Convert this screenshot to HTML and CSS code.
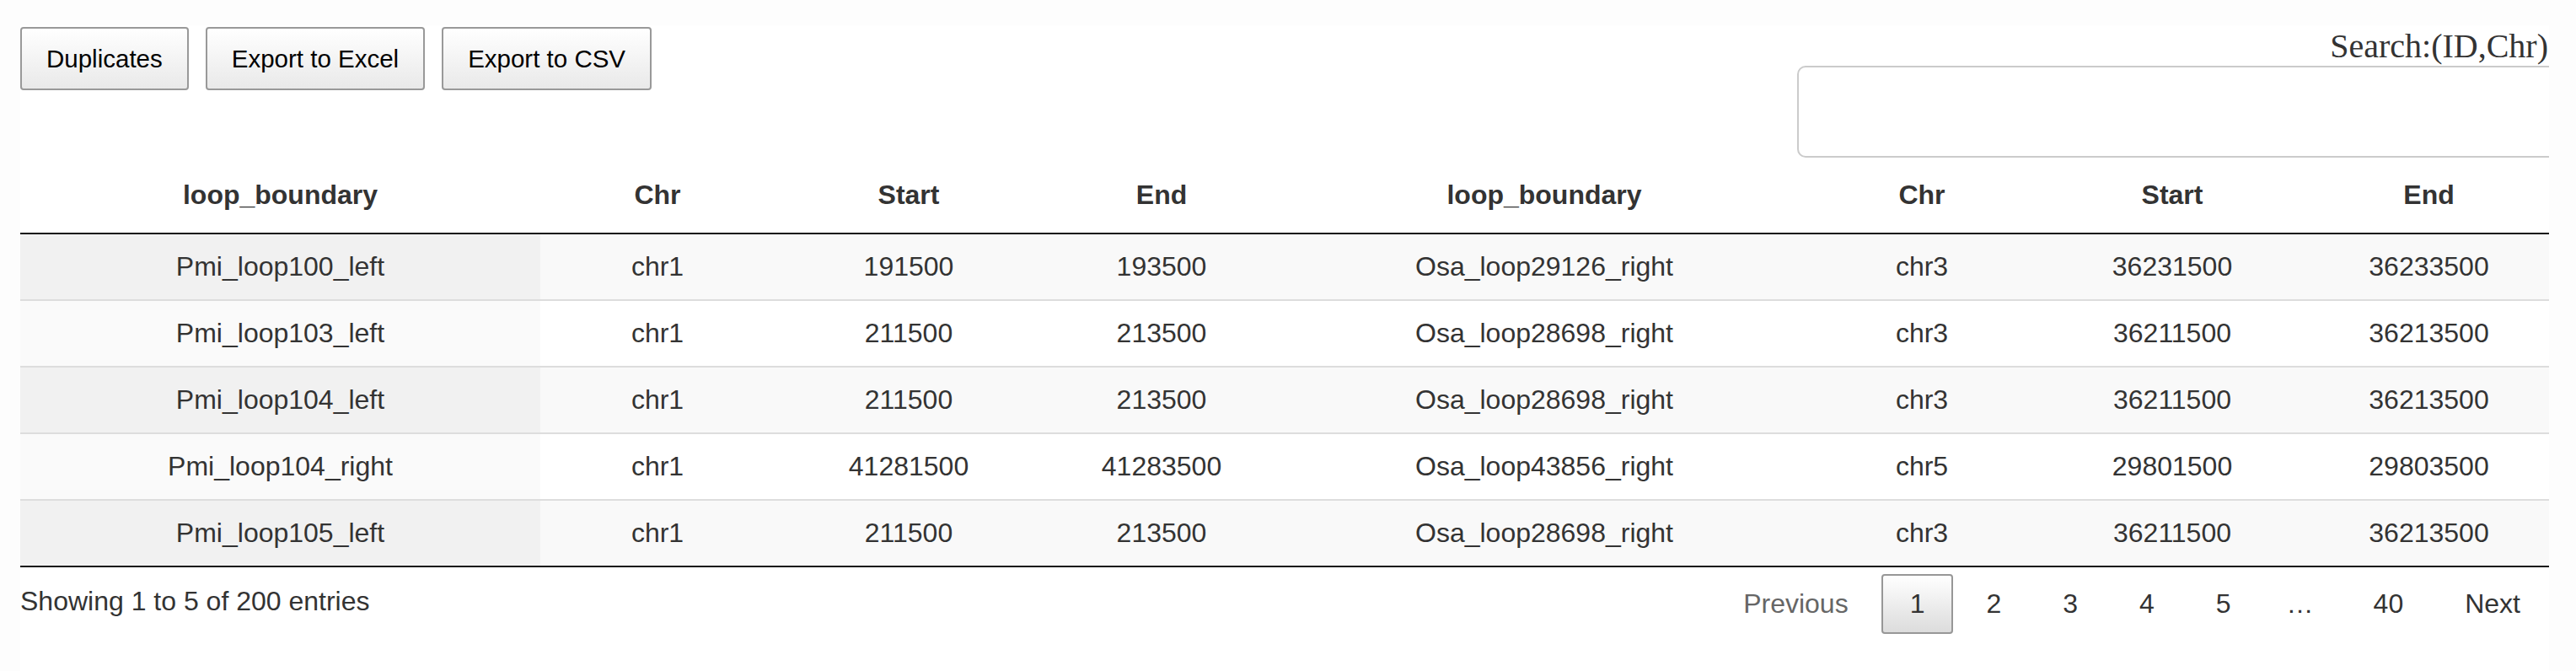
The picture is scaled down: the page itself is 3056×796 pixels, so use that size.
FILE: index.html
```html
<!DOCTYPE html>
<html>
<head>
<meta charset="utf-8">
<title>Loop boundaries</title>
<link rel="stylesheet" href="styles.css">
</head>
<body>
<div class="wrapper">
  <div class="top">
    <div class="buttons">
      <button class="btn">Duplicates</button>
      <button class="btn">Export to Excel</button>
      <button class="btn">Export to CSV</button>
    </div>
    <div class="filter">
      <label class="filter-label">Search:(ID,Chr)</label>
      <input class="filter-input" type="search">
    </div>
  </div>
  <table class="data">
    <colgroup>
      <col class="c1"><col class="c2"><col class="c3"><col class="c4">
      <col class="c5"><col class="c6"><col class="c7"><col class="c8">
    </colgroup>
    <thead>
      <tr>
        <th>loop_boundary</th><th>Chr</th><th>Start</th><th>End</th>
        <th>loop_boundary</th><th>Chr</th><th>Start</th><th>End</th>
      </tr>
    </thead>
    <tbody>
      <tr class="odd">
        <td class="sorted">Pmi_loop100_left</td><td>chr1</td><td>191500</td><td>193500</td>
        <td>Osa_loop29126_right</td><td>chr3</td><td>36231500</td><td>36233500</td>
      </tr>
      <tr class="even">
        <td class="sorted">Pmi_loop103_left</td><td>chr1</td><td>211500</td><td>213500</td>
        <td>Osa_loop28698_right</td><td>chr3</td><td>36211500</td><td>36213500</td>
      </tr>
      <tr class="odd">
        <td class="sorted">Pmi_loop104_left</td><td>chr1</td><td>211500</td><td>213500</td>
        <td>Osa_loop28698_right</td><td>chr3</td><td>36211500</td><td>36213500</td>
      </tr>
      <tr class="even">
        <td class="sorted">Pmi_loop104_right</td><td>chr1</td><td>41281500</td><td>41283500</td>
        <td>Osa_loop43856_right</td><td>chr5</td><td>29801500</td><td>29803500</td>
      </tr>
      <tr class="odd">
        <td class="sorted">Pmi_loop105_left</td><td>chr1</td><td>211500</td><td>213500</td>
        <td>Osa_loop28698_right</td><td>chr3</td><td>36211500</td><td>36213500</td>
      </tr>
    </tbody>
  </table>
  <div class="footer">
    <div class="info">Showing 1 to 5 of 200 entries</div>
    <div class="paginate">
      <a class="pbtn disabled">Previous</a><a class="pbtn current">1</a><a class="pbtn">2</a><a class="pbtn">3</a><a class="pbtn">4</a><a class="pbtn">5</a><span class="ellipsis">…</span><a class="pbtn">40</a><a class="pbtn">Next</a>
    </div>
  </div>
</div>
</body>
</html>
```

FILE: styles.css
```css
html, body {
  margin: 0;
  padding: 0;
}
body {
  background: #fdfdfd;
  font-family: "Liberation Sans", Arial, sans-serif;
  font-size: 32px;
  color: #333;
  height: 796px;
  overflow: hidden;
}
.wrapper {
  width: 3000px;
  margin-left: 24px;
  margin-top: 30px;
  padding-top: 2px;
  background: #fff;
  overflow: hidden;
  min-height: 764px;
}
.top {
  display: flex;
  justify-content: space-between;
  align-items: flex-start;
}
.buttons {
  display: flex;
  gap: 20px;
}
.btn {
  font-family: "Liberation Sans", Arial, sans-serif;
  font-size: 29.5px;
  line-height: 45px;
  padding: 13px 29px;
  color: #000;
  border: 2px solid #999;
  border-radius: 4px;
  background: linear-gradient(to bottom, #ffffff 0%, #e9e9e9 100%);
  cursor: pointer;
}
.filter {
  display: flex;
  flex-direction: column;
  align-items: flex-end;
}
.filter-label {
  font-family: "Liberation Serif", "Times New Roman", serif;
  font-size: 40px;
  line-height: 46px;
  color: #333;
  margin-right: 1px;
}
.filter-input {
  box-sizing: border-box;
  width: 920px;
  height: 109px;
  margin: 0 -28px 0 0;
  border: 2px solid #cbcbcb;
  border-radius: 10px;
  background: #fff;
  outline: none;
}
.data {
  width: 3000px;
  table-layout: fixed;
  border-collapse: separate;
  border-spacing: 0;
  margin-top: 12px;
  border-bottom: 2px solid #111;
}
.c1 { width: 617px; }
.c2 { width: 278px; }
.c3 { width: 318px; }
.c4 { width: 282px; }
.c5 { width: 626px; }
.c6 { width: 270px; }
.c7 { width: 324px; }
.c8 { width: 285px; }
.data th {
  font-weight: bold;
  text-align: center;
  line-height: 45px;
  padding: 10px 20px 22px;
  border-bottom: 2px solid #111;
  color: #333;
}
.data td {
  text-align: center;
  line-height: 45px;
  padding: 16px 20px;
  border-top: 2px solid #ddd;
  white-space: nowrap;
}
.data tbody tr:first-child td {
  border-top: none;
}
.data tr.odd td { background: #f9f9f9; }
.data tr.odd td.sorted { background: #f1f1f1; }
.data tr.even td { background: #fff; }
.data tr.even td.sorted { background: #fafafa; }
.footer {
  display: flex;
  justify-content: space-between;
  align-items: flex-start;
}
.info {
  padding-top: 23px;
  line-height: 35px;
}
.paginate {
  display: flex;
  padding-top: 8px;
}
.pbtn {
  box-sizing: border-box;
  display: inline-block;
  padding: 16px 32px;
  line-height: 35px;
  margin-left: 5px;
  border: 2px solid transparent;
  border-radius: 4px;
  color: #333;
  text-align: center;
  cursor: pointer;
}
.pbtn.disabled {
  color: #666;
}
.pbtn.current {
  border-color: #979797;
  background: linear-gradient(to bottom, #ffffff 0%, #dcdcdc 100%);
}
.ellipsis {
  display: inline-block;
  padding: 18px 32px;
  line-height: 35px;
}
```
